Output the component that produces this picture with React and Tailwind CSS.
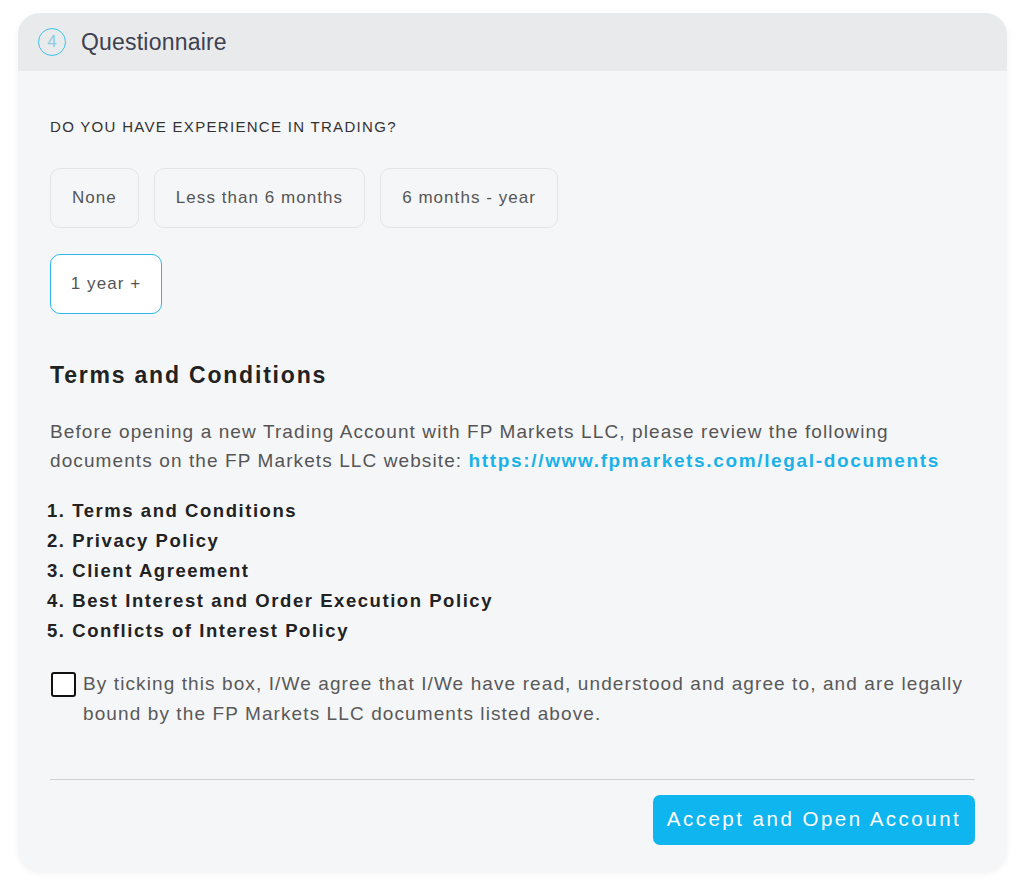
const options = ['None', 'Less than 6 months', '6 months - year'];

const documents = [
  'Terms and Conditions',
  'Privacy Policy',
  'Client Agreement',
  'Best Interest and Order Execution Policy',
  'Conflicts of Interest Policy',
];

const App = () => {
  return (
    <div className="min-h-[886px] bg-white pt-[13px] pl-[18px] pr-[17px] pb-[15px]" style={{ fontFamily: '"Liberation Sans", Arial, sans-serif' }}>
      <div className="rounded-[22px] bg-[#f5f6f8] shadow-[0_2px_6px_rgba(0,0,0,0.06)] overflow-hidden">
        <div className="flex items-center h-[58px] bg-[#e9eaec] pl-[20px]">
          <div className="flex items-center justify-center w-[28px] h-[28px] rounded-full border-[1.5px] border-[#3cc3ec] text-[#8dcbe9] text-[17px]">
            4
          </div>
          <div className="ml-[15px] text-[23px] text-[#3e4150] tracking-[0.2px]">Questionnaire</div>
        </div>

        <div className="px-[32px] pt-[45px] pb-[26px]">
          <div className="text-[15px] text-[#333] uppercase tracking-[1.3px]">Do you have experience in trading?</div>

          <div className="flex gap-[15px] mt-[29px]">
            {options.map((o) => (
              <div key={o} className="h-[60px] flex items-center px-[21px] rounded-[10px] border border-[#e3e4e7] bg-[#f5f6f8] text-[17px] text-[#555] tracking-[1.05px]">
                {o}
              </div>
            ))}
          </div>
          <div className="flex mt-[26px]">
            <div className="h-[60px] w-[112px] flex items-center justify-center rounded-[10px] border border-[#29b9e8] bg-white text-[17px] text-[#555] tracking-[1.05px]">
              1 year +
            </div>
          </div>

          <h2 className="mt-[45px] text-[23px] leading-[33px] font-bold text-[#222] tracking-[1.8px]">Terms and Conditions</h2>

          <p className="mt-[25px] text-[19px] leading-[29px] text-[#555] tracking-[1.1px]">
            Before opening a new Trading Account with FP Markets LLC, please review the following documents on the FP Markets LLC website:{' '}
            <a href="#" className="font-bold text-[#1ab2e8] tracking-[1.65px]">https://www.fpmarkets.com/legal-documents</a>
          </p>

          <ol className="mt-[21px] -ml-[3px] text-[18.5px] leading-[30px] font-bold text-[#222] tracking-[1.55px]">
            {documents.map((d, i) => (
              <li key={d}>{i + 1}. {d}</li>
            ))}
          </ol>

          <div className="flex items-start mt-[23px] ml-[1px]">
            <div className="mt-[3px] w-[25px] h-[25px] shrink-0 rounded-[3px] border-2 border-[#111] bg-white"></div>
            <p className="ml-[7px] text-[19px] leading-[30px] text-[#595959] tracking-[1.1px]">
              By ticking this box, I/We agree that I/We have read, understood and agree to, and are legally bound by the FP Markets LLC documents listed above.
            </p>
          </div>

          <div className="mt-[50px] border-t border-[#cfd1d5]"></div>

          <div className="flex justify-end mt-[15px]">
            <button className="h-[50px] w-[322px] rounded-[7px] bg-[#0fb5ef] text-white text-[20.5px] tracking-[2.5px]">
              Accept and Open Account
            </button>
          </div>
        </div>
      </div>
    </div>
  );
};

export default App;
